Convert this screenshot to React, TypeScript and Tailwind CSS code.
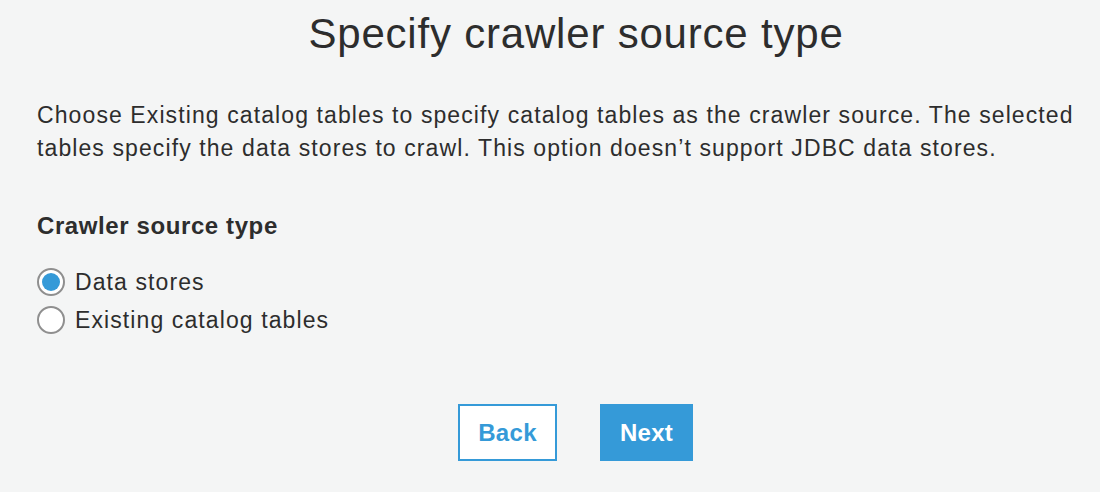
import React, { useState } from 'react';

const options = ['Data stores', 'Existing catalog tables'];

export default function App() {
  const [selected, setSelected] = useState('Data stores');

  return (
    <div
      className="w-[1100px] h-[492px] bg-[#f4f5f5] text-[#2d2d2d] pl-[37px] pr-[20px] overflow-hidden"
      style={{ fontFamily: '"Liberation Sans", Arial, sans-serif' }}
    >
      <h1 className="text-center text-[42px] leading-[48px] tracking-[0.8px] pt-[10px] pl-[35px] font-normal">
        Specify crawler source type
      </h1>

      <p className="mt-[41px] text-[23px] leading-[33px] tracking-[1.1px]">
        Choose Existing catalog tables to specify catalog tables as the crawler source. The selected
        tables specify the data stores to crawl. This option doesn’t support JDBC data stores.
      </p>

      <div className="mt-[47px]">
        <h2 className="text-[24px] leading-[28px] tracking-[0.6px] font-bold">Crawler source type</h2>
        <div className="mt-[23px] flex flex-col">
          {options.map(opt => {
            const checked = selected === opt;
            return (
              <label
                key={opt}
                className="flex items-center gap-[10px] h-[38px] cursor-pointer"
                onClick={() => setSelected(opt)}
              >
                <span className="w-[28px] h-[28px] rounded-full border-[2px] border-[#8f8f8f] bg-white flex items-center justify-center">
                  {checked && <span className="w-[18px] h-[18px] rounded-full bg-[#359ad8]" />}
                </span>
                <span className="text-[23px] leading-[28px] tracking-[1.1px]">{opt}</span>
              </label>
            );
          })}
        </div>
      </div>

      <div className="mt-[65px] flex justify-center gap-[43px] pl-[34px]">
        <button className="w-[99px] h-[57px] border-[2px] border-[#359ad8] bg-white text-[#359ad8] text-[24px] tracking-[0.3px] font-bold">
          Back
        </button>
        <button className="w-[93px] h-[57px] bg-[#359ad8] text-white text-[24px] tracking-[0.3px] font-bold">
          Next
        </button>
      </div>
    </div>
  );
}
